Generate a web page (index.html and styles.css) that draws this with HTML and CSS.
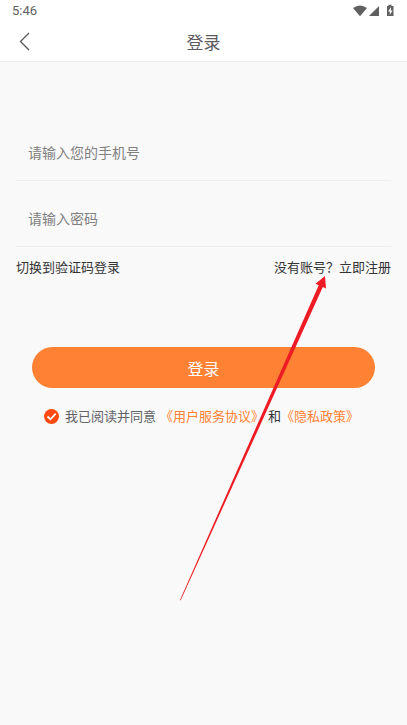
FILE: index.html
```html
<!DOCTYPE html>
<html lang="zh-CN">
<head>
<meta charset="utf-8">
<meta name="viewport" content="width=device-width, initial-scale=1">
<title>登录</title>
<link rel="stylesheet" href="styles.css">
</head>
<body>
<div class="status">
  <span>5:46</span>
  <svg class="status-icons" width="42" height="14" viewBox="0 0 42 14" aria-hidden="true">
    <path d="M0 4 Q7 -1 14 4 L7 12.3 Z"/>
    <path d="M16 12 L26 2 V12 Z"/>
    <path d="M34 2 H35.500 V0.700 H38.500 V2 H40.500 V12 H34 Z"/>
    <path class="bolt" d="M37.900 3 L35.200 7.500 H36.800 V11 L39.500 6.500 H37.900 Z"/>
  </svg>
</div>
<header class="bar">
  <button class="back" type="button" aria-label="返回">
    <svg width="12" height="20" viewBox="0 0 12 20" aria-hidden="true"><path d="M10 1 L1.500 9.500 L10 18"/></svg>
  </button>
  <h1>登录</h1>
</header>
<main>
  <form class="login">
    <input class="field" type="tel" aria-label="手机号" placeholder="请输入您的手机号">
    <input class="field" type="password" aria-label="密码" placeholder="请输入密码">
    <div class="links">
      <a href="#code">切换到验证码登录</a>
      <a href="#register">没有账号？立即注册</a>
    </div>
    <button class="submit" type="button">登录</button>
    <div class="agree">
      <span class="tick">
        <input class="check" type="checkbox" id="agree" checked>
        <svg width="15" height="15" viewBox="0 0 15 15" aria-hidden="true"><path d="M3.500 7.500 L6.500 10.300 L11.700 4.700"/></svg>
      </span>
      <label for="agree">我已阅读并同意</label>
      <a href="#terms">《用户服务协议》</a>
      <span>和<a href="#privacy">《隐私政策》</a></span>
    </div>
  </form>
  <svg class="arrow" width="147" height="326" viewBox="0 0 147 326" aria-hidden="true">
    <path d="M145 0 L146 12.500 L142.800 11 L0.600 324.500 L0 324 L138.700 9.200 L135.500 7.800 Z"/>
  </svg>
</main>
</body>
</html>
```
FILE: styles.css
```css
* {
  box-sizing: border-box;
}

body {
  margin: 0;
  min-height: 100vh;
  background: #f9f9f9;
  color: #333;
  font-family: "Noto Sans CJK SC", sans-serif;
  font-size: 13px;
  line-height: 20px;
}

a {
  color: inherit;
  text-decoration: none;
}

button,
input {
  font-family: inherit;
  margin: 0;
  padding: 0;
  border: 0;
}

.status {
  display: flex;
  justify-content: space-between;
  align-items: center;
  height: 22px;
  padding: 0 12px;
  background: #fff;
  color: #606060;
  font-family: Roboto, sans-serif;
}

.status-icons {
  fill: #606060;
}

.status-icons .bolt {
  fill: #fff;
}

.bar {
  display: grid;
  grid-template-columns: 48px 1fr 48px;
  align-items: center;
  height: 40px;
  background: #fff;
  border-bottom: 1px solid #ededed;
}

.back {
  display: flex;
  align-items: center;
  height: 40px;
  padding-left: 19px;
  background: none;
}

.back path {
  fill: none;
  stroke: #5c5c5c;
  stroke-width: 1.4;
}

h1 {
  margin: 0;
  color: #5c5c5f;
  font-size: 17px;
  font-weight: 400;
  line-height: 24px;
  text-align: center;
}

main {
  position: relative;
}

.login {
  display: flex;
  flex-direction: column;
  padding: 65px 16px 0;
}

.field {
  width: 100%;
  height: 54px;
  padding: 0 12px 4px;
  border-bottom: 1px solid #eee;
  background: transparent;
  font-size: 14px;
  outline: 0;
}

.field + .field {
  margin-top: 12px;
}

.field::placeholder {
  color: #808080;
  opacity: 1;
}

.links {
  display: flex;
  justify-content: space-between;
  margin-top: 10px;
}

.submit {
  height: 41px;
  margin: 70px 16px 0;
  border-radius: 21px;
  background: #ff8133;
  color: #fff;
  font-size: 16px;
}

.agree {
  display: flex;
  align-items: center;
  gap: 4px;
  margin: 18px 28px 0;
  white-space: nowrap;
}

.agree label {
  color: #606266;
}

.agree a {
  color: #ff8133;
}

.tick {
  display: grid;
  flex: none;
  margin-right: 2px;
}

.tick > * {
  grid-area: 1 / 1;
}

.tick svg {
  fill: none;
  stroke: #fff;
  stroke-width: 1.8;
  pointer-events: none;
}

.check {
  width: 15px;
  height: 15px;
  border-radius: 50%;
  appearance: none;
  background: #ccc;
}

.check:checked {
  background: #ff4a12;
}

.arrow {
  position: absolute;
  top: 214px;
  left: calc(50% - 24px);
  fill: #ed1c24;
  pointer-events: none;
}
```
